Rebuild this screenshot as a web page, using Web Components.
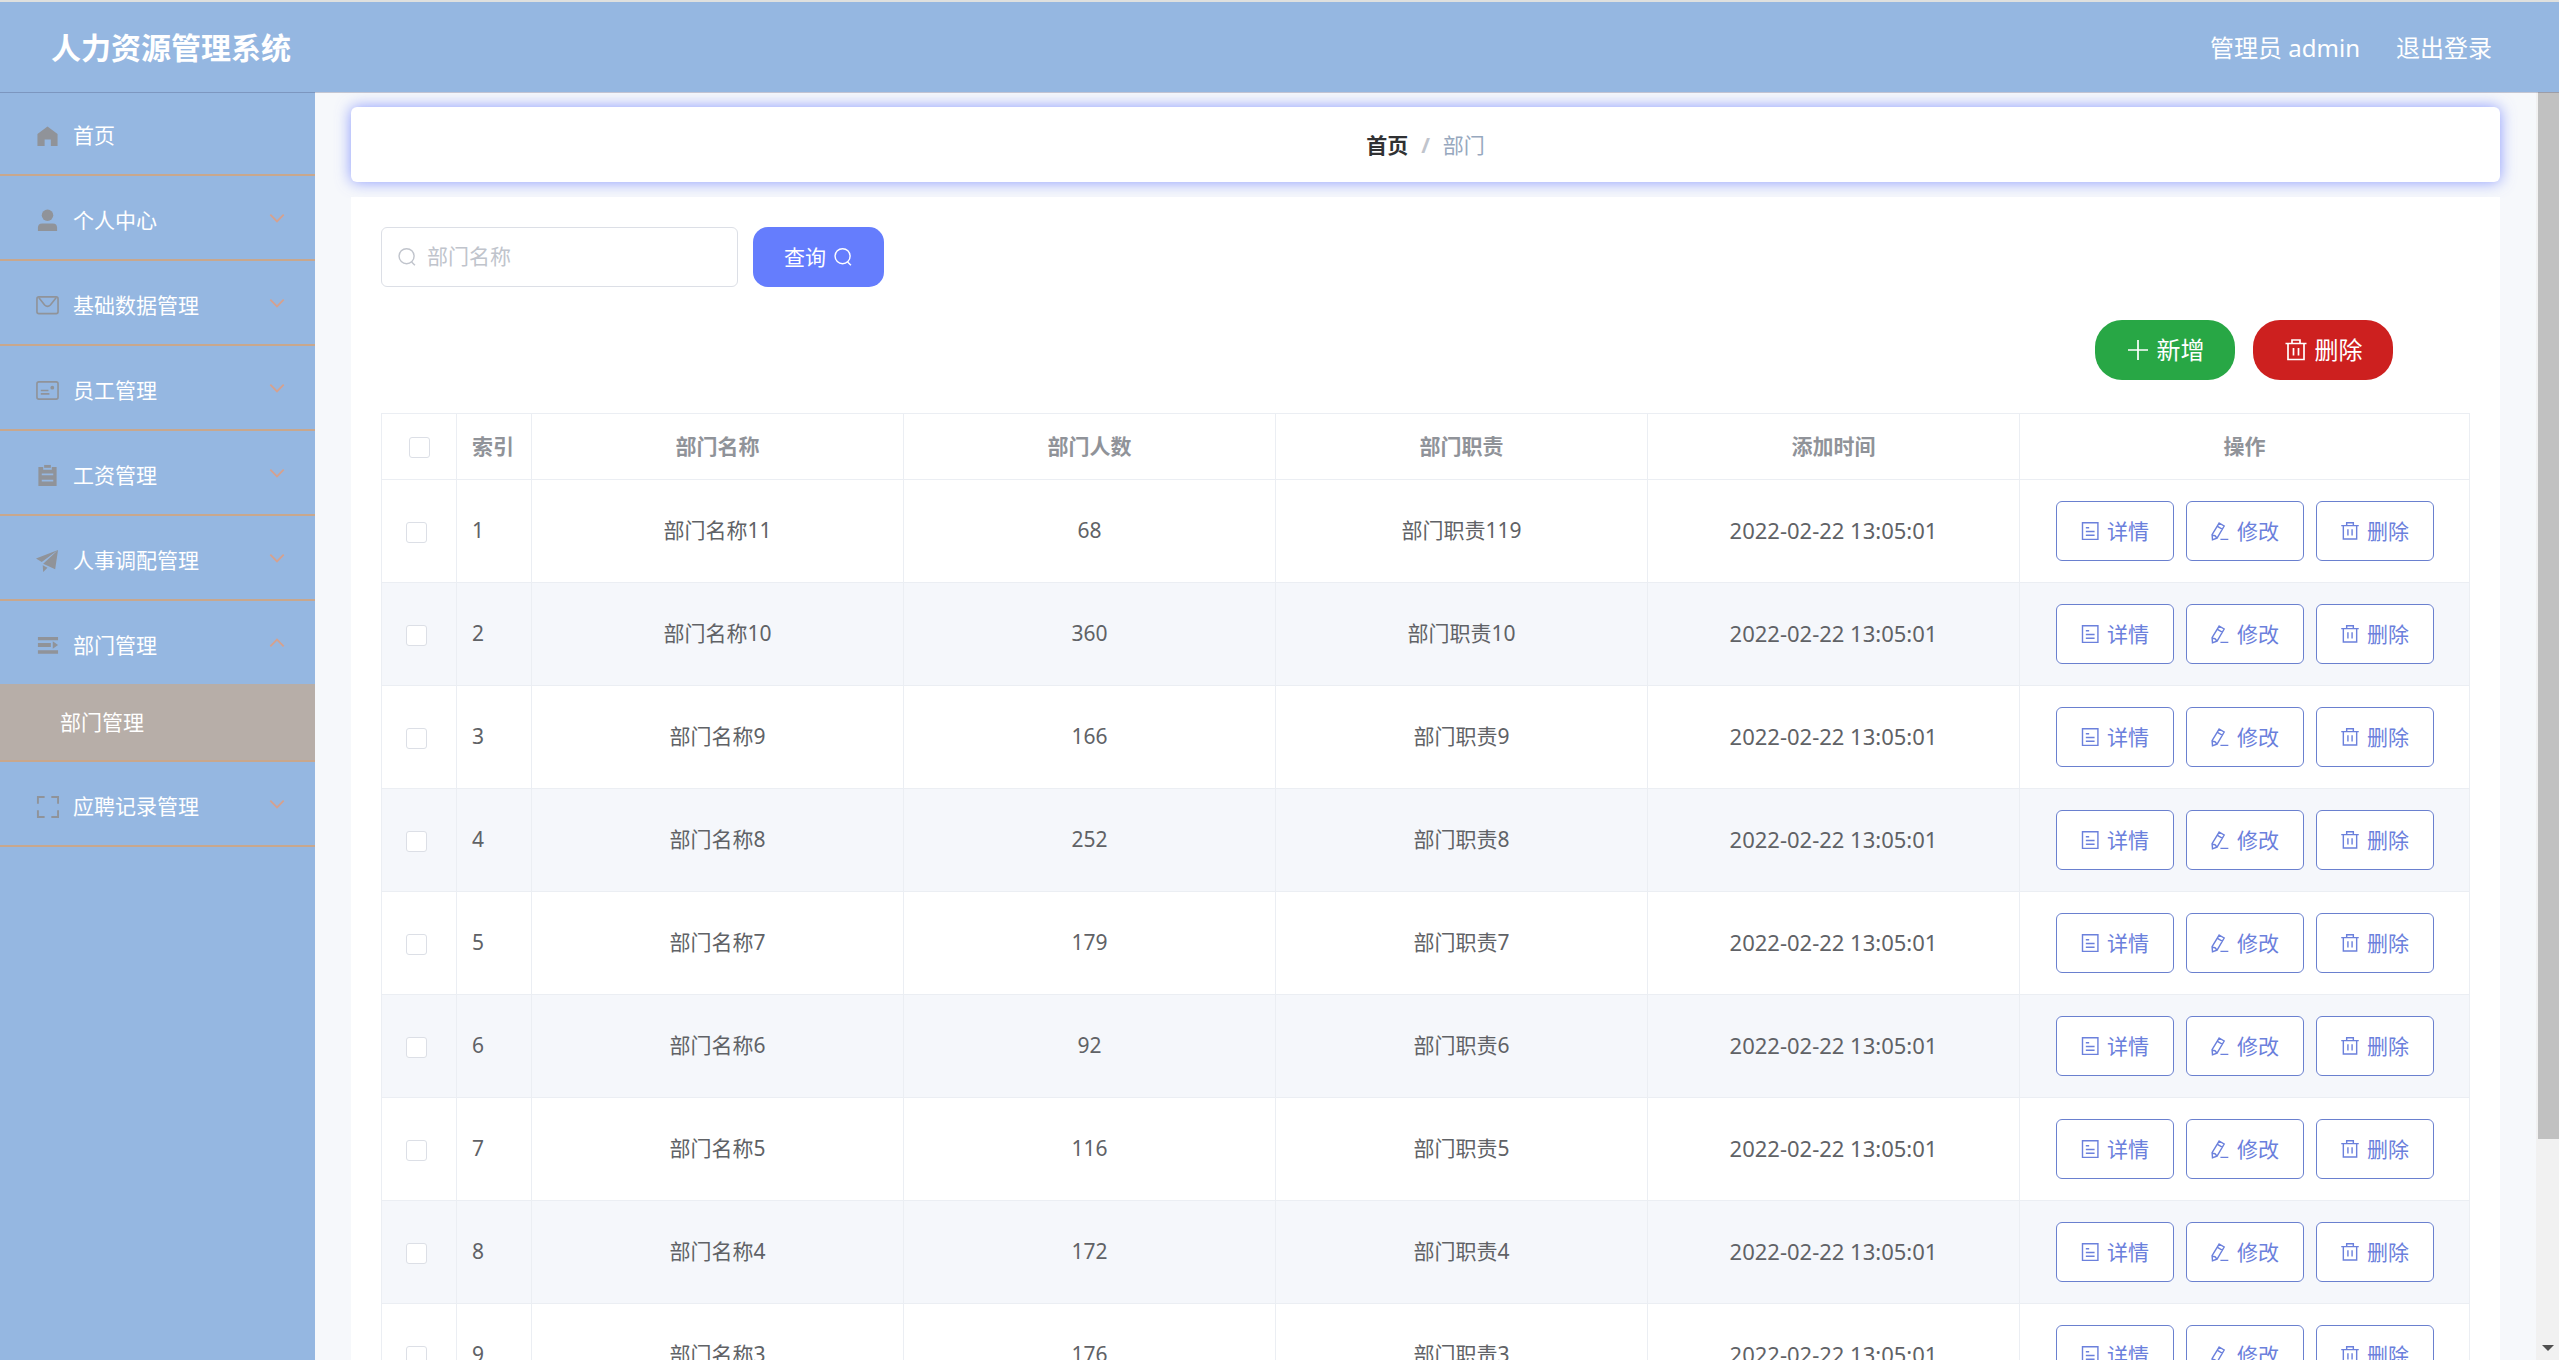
<!DOCTYPE html>
<html lang="zh-CN">
<head>
<meta charset="utf-8">
<meta name="viewport" content="width=device-width, initial-scale=1">
<title>人力资源管理系统</title>
<style>
html, body { height: 100%; margin: 0; }
body {
  font-family: "Noto Sans", "Noto Sans CJK SC", sans-serif;
  font-size: 21px;
  line-height: 30px;
  color: #606266;
  overflow: hidden;
  --blue: #95b7e1;
  --page: #f6f8fb;
  --line: #ebeef3;
  --accent: #6b80dc;
}
</style>
</head>
<body>
<hr-app></hr-app>
<script>
const define = (name, html, setup) => {
  const template = document.createElement('template');
  template.innerHTML = html;
  customElements.define(name, class extends HTMLElement {
    constructor() {
      super();
      this.attachShadow({ mode: 'open' }).append(template.content.cloneNode(true));
    }
    connectedCallback() { if (setup) setup(this, this.shadowRoot); }
  });
};

const ICONS = {
  home: '<path fill="currentColor" d="M12 1.5 22.5 9.5V22h-7v-7h-6.500v7H1.500V9.500Z"/>',
  user: '<circle cx="12" cy="6.500" r="6" fill="currentColor"/><path fill="currentColor" d="M2 23v-3.500Q2 15 6.500 15h11Q22 15 22 19.500V23Z"/>',
  mail: '<rect x="1" y="3" width="22" height="17.500" rx="2" /><path d="m3 4 6 7.500q3 3 6 0L21 4"/>',
  card: '<rect x="1" y="3" width="22" height="18" rx="2"/><path d="M5 12h8M5 15.500h9"/><circle cx="17" cy="9" r="2" fill="currentColor" stroke="none"/>',
  order: '<path fill="currentColor" fill-rule="evenodd" d="M2.500 3h5v3h9V3h5v20h-19ZM6 10v1.700h12V10Zm0 6.500v1.700h12v-1.700Z"/><path fill="currentColor" d="M8.500 1h7v3h-7Z"/>',
  plane: '<path fill="currentColor" d="M0 10 23 1 6 13.500ZM23 1 20 21 7.500 15.500ZM7 17l5 2.500L7.500 24Z"/>',
  fold: '<path fill="currentColor" d="M2 3h21v3.500H2ZM2 9.500h13.500v4H2ZM2 17h21v3.500H2ZM17.500 7.500 23 11.500l-5.500 4Z"/>',
  full: '<path stroke-width="2" d="M2 9V2h7M16 2h7v7M23 16v7h-7M9 23H2v-7"/>',
  down: '<path stroke-width="2.200" d="m4 8 8 8 8-8"/>',
  up: '<path stroke-width="2.200" d="m4 16 8-8 8 8"/>',
  search: '<ellipse cx="11.500" cy="11" rx="9" ry="9"/><path d="m17.500 18 4 4"/>',
  plus: '<path d="M12 2v20M2 12h20"/>',
  trash: '<path d="M1.500 5.500h21M8 5V2h8v3M4 6v15.500h16V6M9.500 10v7.500M14.500 10v7.500"/>',
  doc: '<path d="M3 2h18.500v20H3ZM7 8h4M7 12.500h10.500M7 17h10.500"/>',
  edit: '<path d="m11 2.500 6 3.500-8.500 14.500-5.500 2-.500-6Zm-2 4 6 3.500M3 17q4 0 5 3.500M12.500 22H22"/>'
};
define('hr-icon', `<style>
:host { display: block; flex: none; width: var(--icon, 20px); height: var(--icon, 20px); }
svg { display: block; width: 100%; height: 100%; fill: none; stroke-width: 1.7; }
</style><svg viewBox="0 0 24 24" aria-hidden="true"></svg>`, (el, root) => {
  const name = el.getAttribute('name');
  const svg = root.querySelector('svg');
  if (!['home', 'user', 'order', 'plane', 'fold'].includes(name)) svg.setAttribute('stroke', 'currentColor');
  svg.innerHTML = ICONS[name] || '';
});

define('hr-header', `<style>
:host { display: flex; justify-content: space-between; align-items: center; flex: none; height: 88px;
  padding: 2px 67px 0 51px; background: var(--blue); color: #fff; border-top: 2px solid #dfe0de;
  box-shadow: 0 1px 0 rgba(50, 50, 90, .25); position: relative; z-index: 2; }
h1 { margin: 0; font-size: 30px; line-height: 40px; font-weight: 700; }
nav { display: flex; gap: 36px; font-size: 24px; line-height: 36px; }
a { color: inherit; text-decoration: none; }
</style><h1>人力资源管理系统</h1><nav><span>管理员 admin</span><a href="#logout">退出登录</a></nav>`);

define('hr-menu-item', `<style>
:host { display: block; border-bottom: 2px solid #c8a78d; }
a { display: flex; align-items: center; height: 83px; box-sizing: border-box; padding: 0 28px 0 36px;
  color: #fff; text-decoration: none; }
:host([leaf]) a { height: 82px; }
.icon { --icon: 23px; color: #909399; margin-right: 14px; padding-top: 6px; }
.label { flex: 1; padding-top: 4px; }
.arrow { --icon: 20px; color: #d6a18e; }
</style><a href="#"><hr-icon class="icon"></hr-icon><span class="label"></span></a><slot></slot>`, (el, root) => {
  root.querySelector('.label').textContent = el.getAttribute('label');
  const icon = document.createElement('hr-icon');
  icon.className = 'icon';
  icon.setAttribute('name', el.getAttribute('icon'));
  root.querySelector('.icon').replaceWith(icon);
  if (el.hasAttribute('leaf')) return;
  const arrow = document.createElement('hr-icon');
  arrow.className = 'arrow';
  arrow.setAttribute('name', el.hasAttribute('open') ? 'up' : 'down');
  root.querySelector('a').append(arrow);
});

define('hr-sidebar', `<style>
:host { display: block; flex: none; width: 315px; background: var(--blue); }
.sub { display: flex; align-items: center; height: 76px; padding-left: 60px; background: #b7aea8; color: #fff; text-decoration: none; }
</style><nav>
<hr-menu-item icon="home" label="首页" leaf></hr-menu-item>
<hr-menu-item icon="user" label="个人中心"></hr-menu-item>
<hr-menu-item icon="mail" label="基础数据管理"></hr-menu-item>
<hr-menu-item icon="card" label="员工管理"></hr-menu-item>
<hr-menu-item icon="order" label="工资管理"></hr-menu-item>
<hr-menu-item icon="plane" label="人事调配管理"></hr-menu-item>
<hr-menu-item icon="fold" label="部门管理" open><a class="sub" href="#dept">部门管理</a></hr-menu-item>
<hr-menu-item icon="full" label="应聘记录管理"></hr-menu-item>
</nav>`);

define('hr-breadcrumb', `<style>
:host { display: flex; justify-content: center; align-items: center; gap: 13px; height: 75px; background: #fff;
  border-radius: 6px; box-shadow: 0 0 15px rgba(92, 112, 255, .7); color: #97a8be; }
a { color: #303133; font-weight: 700; text-decoration: none; }
i { color: #c0c4cc; font-weight: 700; font-style: normal; }
</style><a href="#home">首页</a><i>/</i><span>部门</span>`);

define('hr-button', `<style>
:host { display: block; }
button { display: flex; align-items: center; justify-content: center; gap: 7px; width: 118px; height: 60px; padding: 0;
  box-sizing: border-box; font: inherit; color: var(--accent); background: #fff; border: 1px solid #6a80cf; border-radius: 6px; }
span { padding-bottom: 1px; }
:host([kind=query]) button { width: 131px; color: #fff; background: #657dfd; border: 0; border-radius: 15px; flex-direction: row-reverse; }
:host([kind=add]) button, :host([kind=remove]) button { width: 140px; border: 0; border-radius: 27px; color: #fff; font-size: 24px; --icon: 24px; }
:host([kind=add]) button { background: #28a745; }
:host([kind=remove]) button { background: #cd201f; }
:host([kind=add]) span, :host([kind=remove]) span { padding: 0; }
</style><button type="button"><slot name="icon"></slot><span><slot></slot></span></button>`);

define('hr-search', `<style>
:host { display: flex; gap: 15px; }
label { display: flex; align-items: center; gap: 10px; width: 357px; height: 60px; box-sizing: border-box; padding: 0 15px;
  border: 1px solid #dcdfe6; border-radius: 6px; background: #fff; color: #c0c4cc; }
input { flex: 1; min-width: 0; border: 0; padding: 0 0 2px; outline: 0; background: none; font: inherit; color: #606266; }
input::placeholder { color: #c0c4cc; opacity: 1; }
</style><label><hr-icon name="search"></hr-icon><input type="text" placeholder="部门名称" aria-label="部门名称"></label>
<hr-button kind="query"><hr-icon slot="icon" name="search"></hr-icon>查询</hr-button>`);

define('hr-table', `<style>
:host { display: block; }
table { width: 100%; table-layout: fixed; border-collapse: collapse; }
th, td { border: 1px solid var(--line); padding: 0 15px 2px; text-align: center; height: 100px; box-sizing: content-box; }
th { height: 63px; color: #909399; font-weight: 700; }
tbody tr:nth-child(even) { background: #f5f7fb; }
td:nth-child(1) { text-align: left; padding: 0 0 2px 24px; }
th:nth-child(1) { padding: 0 0 2px; }
th:nth-child(2), td:nth-child(2) { text-align: left; }
td:nth-child(6) { font-size: 22px; }
td:last-child { height: 102px; padding-bottom: 0; }
.pick { width: 75px; } .ops { width: 450px; }
input { appearance: none; display: inline-block; vertical-align: middle; width: 21px; height: 21px; margin: 0;
  border: 1px solid #dcdfe6; border-radius: 3px; background: #fff; }
.actions { display: flex; justify-content: center; gap: 12px; }
</style><table><colgroup><col class="pick"><col class="pick"><col><col><col><col><col class="ops"></colgroup>
<thead><tr><th><input type="checkbox" aria-label="全选"></th><th>索引</th><th>部门名称</th><th>部门人数</th><th>部门职责</th><th>添加时间</th><th>操作</th></tr></thead>
<tbody></tbody></table>`, (el, root) => {
  const rows = [['11', 68, '119'], ['10', 360, '10'], ['9', 166, '9'], ['8', 252, '8'], ['7', 179, '7'],
    ['6', 92, '6'], ['5', 116, '5'], ['4', 172, '4'], ['3', 176, '3']];
  root.querySelector('tbody').innerHTML = rows.map(([name, count, duty], i) => `<tr>
<td><input type="checkbox" aria-label="${i + 1}"></td><td>${i + 1}</td><td>部门名称${name}</td><td>${count}</td><td>部门职责${duty}</td><td>2022-02-22 13:05:01</td>
<td><div class="actions"><hr-button><hr-icon slot="icon" name="doc"></hr-icon>详情</hr-button><hr-button><hr-icon slot="icon" name="edit"></hr-icon>修改</hr-button><hr-button><hr-icon slot="icon" name="trash"></hr-icon>删除</hr-button></div></td></tr>`).join('');
});

define('hr-scrollbar', `<style>
:host { display: flex; flex-direction: column; justify-content: space-between; align-items: center; flex: none; width: 23px; background: #f1f1f1; }
.thumb { align-self: flex-end; width: 21px; height: 82.6%; background: #c1c1c1; }
.arrow { margin-bottom: 9px; border: 6px solid transparent; border-bottom: 0; border-top-color: #505050; }
</style><div class="thumb"></div><div class="arrow"></div>`);

define('hr-app', `<style>
:host { display: flex; flex-direction: column; height: 100vh; overflow: hidden; }
.body { display: flex; flex: 1; min-height: 0; }
main { flex: 1; min-width: 0; overflow: hidden; background: var(--page); padding: 15px 36px 0; }
section { margin-top: 15px; padding: 30px; background: #fff; position: relative; }
.tools { display: flex; justify-content: flex-end; gap: 18px; padding: 33px 77px 33px 0; }
</style><hr-header></hr-header><div class="body"><hr-sidebar></hr-sidebar><main><hr-breadcrumb></hr-breadcrumb>
<section><hr-search></hr-search><div class="tools">
<hr-button kind="add"><hr-icon slot="icon" name="plus"></hr-icon>新增</hr-button>
<hr-button kind="remove"><hr-icon slot="icon" name="trash"></hr-icon>删除</hr-button></div><hr-table></hr-table></section></main><hr-scrollbar></hr-scrollbar></div>`);
</script>
</body>
</html>
